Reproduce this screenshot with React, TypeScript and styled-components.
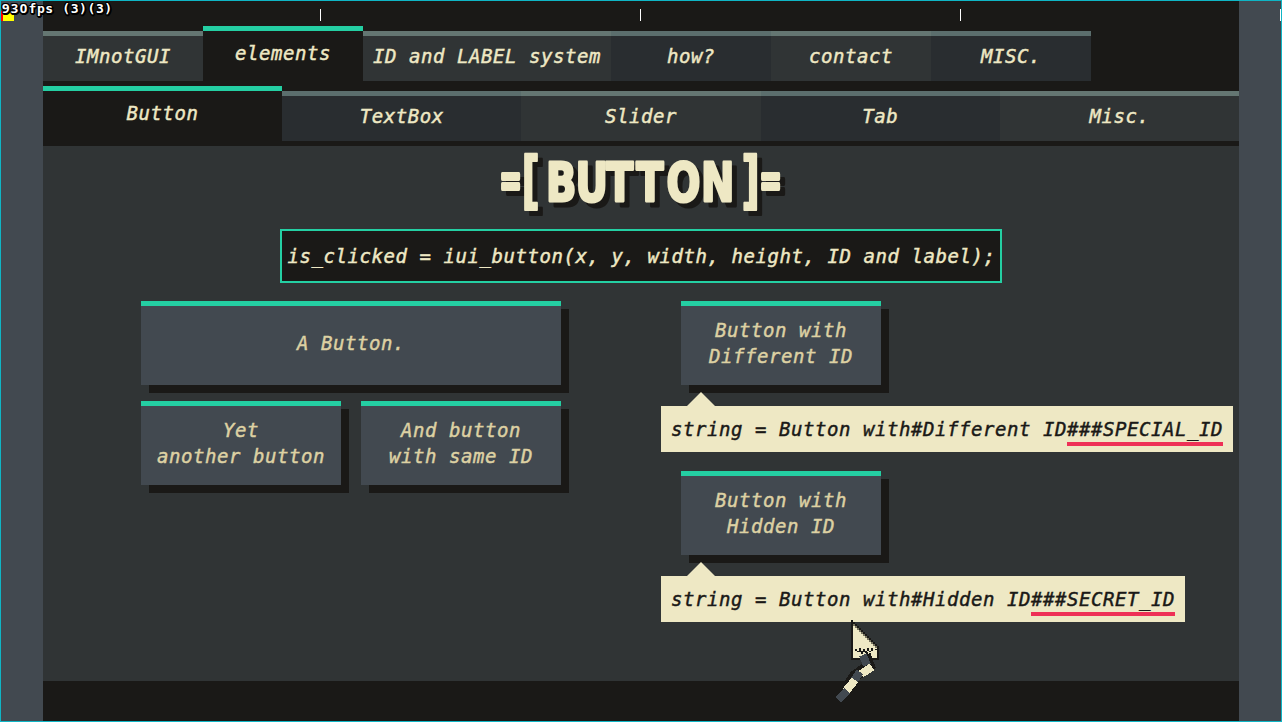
import React from "react";
import styled, { createGlobalStyle } from "styled-components";

const c = {
  ink: "#1a1917",
  panel: "#303435",
  slate: "#424950",
  teal: "#24cfa3",
  cream: "#eee8c4",
  sand: "#ddd1a3",
  red: "#ee3056",
  frame: "#0fb5c5",
};

const GlobalStyle = createGlobalStyle`
  * { box-sizing: border-box; }
  body { margin: 0; background: ${c.ink}; overflow: hidden; }
`;

const Window = styled.div`
  position: relative;
  width: 1282px;
  height: 722px;
  padding: 0 42px;
  border: 1px solid ${c.frame};
  background: ${c.slate};
  color: ${c.cream};
  font: italic 19px "DejaVu Sans Mono", monospace;
  letter-spacing: 0.562px;
  -webkit-text-stroke: 0.45px currentColor;
  font-variant-ligatures: none;
  white-space: pre;
`;

const Main = styled.main`
  height: 720px;
  padding-top: 25px;
  background: ${c.ink};
`;

const TabBar = styled.nav`
  display: flex;
  align-items: flex-end;
  height: 55px;
  margin-bottom: 5px;
`;

const TabItem = styled.button<{ $active?: boolean; $alt?: boolean; $width?: number }>`
  flex: ${(p) => (p.$width ? `0 0 ${p.$width}px` : "1 1 0")};
  height: ${(p) => (p.$active ? 55 : 50)}px;
  padding: 0;
  border: 0;
  border-top: 5px solid ${(p) => (p.$active ? c.teal : p.$alt ? "#5b6e6d" : "#647672")};
  background: ${(p) => (p.$active ? c.ink : p.$alt ? "#292d30" : c.panel)};
  color: inherit;
  font: inherit;
  letter-spacing: inherit;
  line-height: ${(p) => (p.$active ? 45 : 41)}px;
  display: flex;
  justify-content: center;
`;

const Panel = styled.section`
  height: 535px;
  display: flex;
  flex-direction: column;
  align-items: center;
  background: ${c.panel};
`;

const Heading = styled.h1`
  margin: 0;
  height: 83px;
  font: inherit;
  letter-spacing: 0;
  -webkit-text-stroke: 0;
`;

const TitleArt = styled.svg`
  display: block;
  overflow: visible;
  filter: drop-shadow(5px 5px 0 ${c.ink});
`;

const Signature = styled.code`
  width: 722px;
  height: 54px;
  padding-left: 1px;
  border: 2px solid ${c.teal};
  background: ${c.ink};
  font: inherit;
  line-height: 50px;
  text-align: center;
`;

const Examples = styled.div`
  align-self: stretch;
  display: flex;
  gap: 100px;
  padding: 18px 0 0 98px;
`;

const ButtonGrid = styled.div`
  display: grid;
  grid-template-columns: 200px 200px;
  gap: 16px 20px;
  align-content: start;
`;

const DemoButton = styled.button<{ $wide?: boolean }>`
  grid-column: ${(p) => (p.$wide ? "span 2" : "auto")};
  width: ${(p) => (p.$wide ? 420 : 200)}px;
  height: 84px;
  padding: 0 0 6px;
  border: 0;
  border-top: 5px solid ${c.teal};
  background: ${c.slate};
  box-shadow: 8px 8px 0 ${c.ink};
  color: ${c.sand};
  font: inherit;
  letter-spacing: inherit;
  line-height: 26px;
  white-space: pre;
`;

const Notes = styled.div`
  display: flex;
  flex-direction: column;
  gap: 19px;
`;

const Note = styled.div`
  display: flex;
  flex-direction: column;
  align-items: flex-start;
`;

const NoteButton = styled(DemoButton)`
  margin-left: 20px;
`;

const Pointer = styled.div`
  z-index: 1;
  margin: 7px 0 0 26px;
  width: 28px;
  height: 14px;
  background: ${c.cream};
  clip-path: polygon(50% 0, 100% 100%, 0 100%);
`;

const Callout = styled.div`
  height: 46px;
  padding: 0 10px;
  display: flex;
  background: ${c.cream};
  color: ${c.ink};
  line-height: 46px;
`;

const Marked = styled.span`
  height: 40px;
  border-bottom: 4px solid ${c.red};
`;

const Overlay = styled.div`
  position: absolute;
  inset: 0;
  pointer-events: none;
`;

const Tick = styled.i<{ $x: number }>`
  position: absolute;
  top: 8px;
  left: ${(p) => p.$x}px;
  width: 1px;
  height: 12px;
  background: #fff;
`;

const Swatch = styled.i`
  position: absolute;
  top: 10px;
  left: 0;
  width: 13px;
  height: 10px;
  border-left: 2px solid #f00;
  background: #ff0;
`;

const Fps = styled.div`
  position: absolute;
  top: -1px;
  left: 1px;
  color: #fff;
  font: bold 13px/17px "DejaVu Sans Mono", monospace;
  letter-spacing: 0.6px;
  -webkit-text-stroke: 0;
  text-shadow: -1px -1px #000, 0 -1px #000, 1px -1px #000, -1px 0 #000, 1px 0 #000,
    -1px 1px #000, 0 1px #000, 1px 1px #000, 0 2px #000, 1px 2px #000, 2px 1px #000;
`;

const FpsNumber = styled.span`
  font: 700 13px/17px "Open Sans", sans-serif;
  letter-spacing: 1.4px;
`;

const Cursor = styled.svg`
  position: absolute;
  left: 829px;
  top: 617px;
`;

const topTabs = [
  { label: "IMnotGUI", width: 160 },
  { label: "elements", width: 160, active: true },
  { label: "ID and LABEL system", width: 248 },
  { label: "how?", width: 160 },
  { label: "contact", width: 160 },
  { label: "MISC.", width: 160 },
];
const subTabs = ["Button", "TextBox", "Slider", "Tab", "Misc."];

const squeeze = 0.74;
const wordX = [48, 77.5, 108, 138.4, 168.5, 203].map((x) => (x / squeeze).toFixed(1)).join(" ");

const Title = () => (
  <Heading>
    <TitleArt width="286" height="76">
      <g
        fill={c.cream}
        stroke={c.cream}
        strokeLinejoin="round"
        fontFamily="DejaVu Sans"
        fontWeight="700"
        fontStyle="normal"
      >
        <text transform="translate(1.5 48.9) scale(0.63 1)" fontSize="42" strokeWidth="4">=</text>
        <text transform="translate(23.5 54.5) scale(0.64 1)" fontSize="62.5" strokeWidth="2.4">[</text>
        <text transform={`translate(0 55) scale(${squeeze} 1)`} x={wordX} fontSize="54" strokeWidth="3">
          BUTTON
        </text>
        <text transform="translate(243.5 54.5) scale(0.64 1)" fontSize="62.5" strokeWidth="2.4">]</text>
        <text transform="translate(261.5 48.9) scale(0.63 1)" fontSize="42" strokeWidth="4">=</text>
      </g>
    </TitleArt>
  </Heading>
);

const edgeCells = Array.from({ length: 12 }, (_, k) => k);

const CursorArt = () => (
  <Cursor width="56" height="88" shapeRendering="crispEdges">
    <path
      d="M21 2h2v2h2v2h2v2h2v2h2v2h2v2h2v2h2v2h2v2h2v2h2v2h2v2h2v2h2v14h-28z"
      fill={c.ink}
    />
    <path
      d="M23 6h2v2h2v2h2v2h2v2h2v2h2v2h2v2h2v2h2v2h2v2h2v2h2v12h-24z"
      fill={c.cream}
    />
    {edgeCells.map((k) => (
      <rect key={k} x={23 + 2 * k} y={6 + 2 * k} width="2" height="2" fill="#77745f" />
    ))}
    <path
      d="M26 31v2M30 30v2M30 32v2M34 31v3M38 30v3M42 30v3M46 31v1M28 33v1M32 33v2M36 33v2M40 33v1M31 35h2M36 35h2"
      stroke={c.ink}
      strokeWidth="1.5"
    />
    <path d="M35 37L39 48L25 58L16 71L13 75" fill="none" stroke={c.ink} strokeWidth="11.5" />
    <path d="M33 37L37 47" stroke={c.slate} strokeWidth="8" />
    <path d="M42 49L31 56" stroke={c.cream} strokeWidth="8" />
    <path d="M30 54L24 63" stroke={c.slate} strokeWidth="8" />
    <path d="M25 62L16 73" stroke={c.cream} strokeWidth="8" />
    <path d="M17 73L8 82" stroke={c.slate} strokeWidth="8" />
  </Cursor>
);

export default function App() {
  return (
    <Window>
      <GlobalStyle />
      <Main>
        <TabBar>
          {topTabs.map((t, i) => (
            <TabItem key={t.label} $width={t.width} $active={t.active} $alt={i % 2 === 1}>
              {t.label}
            </TabItem>
          ))}
        </TabBar>
        <TabBar>
          {subTabs.map((label, i) => (
            <TabItem key={label} $active={i === 0} $alt={i % 2 === 1}>
              {label}
            </TabItem>
          ))}
        </TabBar>
        <Panel>
          <Title />
          <Signature>is_clicked = iui_button(x, y, width, height, ID and label);</Signature>
          <Examples>
            <ButtonGrid>
              <DemoButton $wide>A Button.</DemoButton>
              <DemoButton>{"Yet\nanother button"}</DemoButton>
              <DemoButton>{"And button\nwith same ID"}</DemoButton>
            </ButtonGrid>
            <Notes>
              <Note>
                <NoteButton>{"Button with\nDifferent ID"}</NoteButton>
                <Pointer />
                <Callout>
                  string = Button with#Different ID<Marked>###SPECIAL_ID</Marked>
                </Callout>
              </Note>
              <Note>
                <NoteButton>{"Button with\nHidden ID"}</NoteButton>
                <Pointer />
                <Callout>
                  string = Button with#Hidden ID<Marked>###SECRET_ID</Marked>
                </Callout>
              </Note>
            </Notes>
          </Examples>
        </Panel>
      </Main>
      <Overlay>
        <Swatch />
        {[319, 639, 959, 1279].map((x) => (
          <Tick key={x} $x={x} />
        ))}
        <Fps>
          <FpsNumber>930</FpsNumber>fps (3)(3)
        </Fps>
        <CursorArt />
      </Overlay>
    </Window>
  );
}
